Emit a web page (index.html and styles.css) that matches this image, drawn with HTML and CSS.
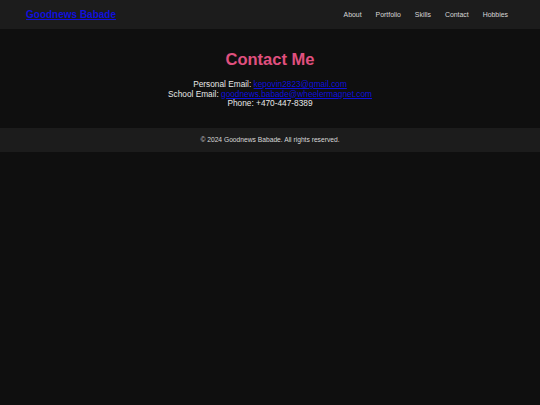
FILE: index.html
```html
<!DOCTYPE html>
<html lang="en">
<head>
<meta charset="utf-8">
<title>Goodnews Babade</title>
<link rel="stylesheet" href="styles.css">
</head>
<body>
<header class="site-header">
  <a class="logo" href="#">Goodnews Babade</a>
  <nav class="nav">
    <a href="#">About</a>
    <a href="#">Portfolio</a>
    <a href="#">Skills</a>
    <a href="#">Contact</a>
    <a href="#">Hobbies</a>
  </nav>
</header>
<main class="contact">
  <h2 class="title">Contact Me</h2>
  <p class="line">Personal Email: <a href="#">kepovin2823@gmail.com</a></p>
  <p class="line">School Email: <a href="#">goodnews.babade@wheelermagnet.com</a></p>
  <p class="line">Phone: +470-447-8389</p>
</main>
<footer class="site-footer">
  <p>&copy; 2024 Goodnews Babade. All rights reserved.</p>
</footer>
</body>
</html>
```

FILE: styles.css
```css
html, body {
  margin: 0;
  padding: 0;
  background: #0f0f0f;
  color: #ffffff;
  font-family: "Liberation Sans", Arial, sans-serif;
}
a { color: #1010dd; }
.site-header {
  display: flex;
  justify-content: space-between;
  align-items: center;
  height: 29px;
  padding: 0 32px 0 26px;
  background: #1c1c1c;
}
.logo {
  font-size: 10px;
  font-weight: bold;
}
.nav {
  display: flex;
  gap: 14px;
}
.nav a {
  color: #d8d8d8;
  text-decoration: none;
  font-size: 6.9px;
}
.contact {
  text-align: center;
  padding: 21px 0 19px;
}
.title {
  margin: 0 0 11px;
  font-size: 16.5px;
  font-weight: bold;
  color: #e0507f;
}
.line {
  margin: 0;
  font-size: 8.3px;
  line-height: 9.5px;
  color: #e8e8e8;
}
.site-footer {
  background: #1c1c1c;
  text-align: center;
  padding: 8px 0;
}
.site-footer p {
  margin: 0;
  font-size: 6.7px;
  line-height: 8px;
  color: #d8d8d8;
}
```
